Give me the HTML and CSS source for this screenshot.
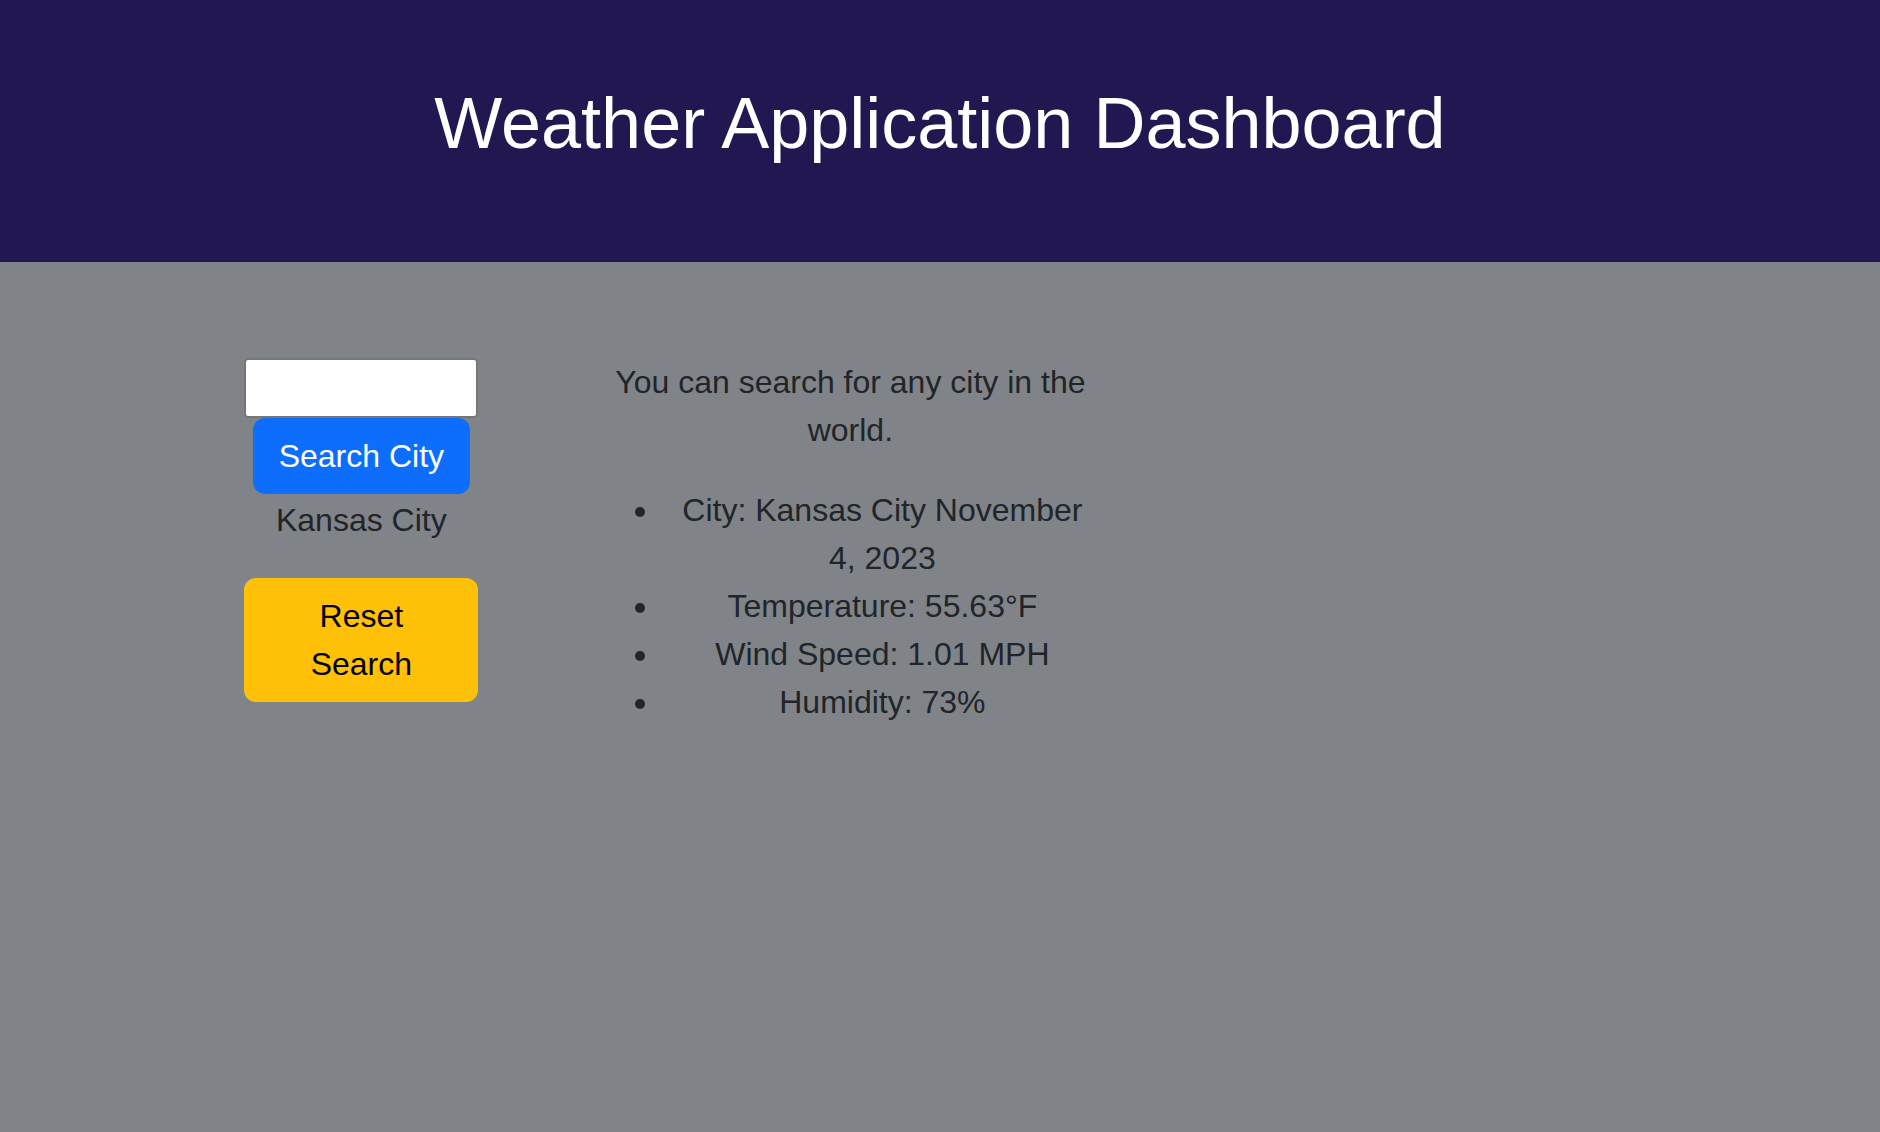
FILE: index.html
```html
<!DOCTYPE html>
<html lang="en">
<head>
<meta charset="utf-8">
<title>Weather Application Dashboard</title>
<link rel="stylesheet" href="styles.css">
</head>
<body>
<header class="page-header">
  <h1 class="page-title">Weather Application Dashboard</h1>
</header>
<main class="dashboard">
  <section class="search">
    <form class="search-form">
      <input class="search-input" type="text" aria-label="City">
      <button class="btn btn-primary" type="button">Search City</button>
    </form>
    <p class="history">Kansas City</p>
    <button class="btn btn-warning" type="button">Reset Search</button>
  </section>
  <section class="weather">
    <p class="intro">You can search for any city in the world.</p>
    <ul class="conditions">
      <li class="condition">City: Kansas City November 4, 2023</li>
      <li class="condition">Temperature: 55.63°F</li>
      <li class="condition">Wind Speed: 1.01 MPH</li>
      <li class="condition">Humidity: 73%</li>
    </ul>
  </section>
</main>
</body>
</html>
```
FILE: styles.css
```css
* {
  box-sizing: border-box;
}

body {
  margin: 0;
  background: #808387;
  color: #212529;
  font-family: "Liberation Sans", Arial, sans-serif;
  font-size: 32px;
  line-height: 48px;
  text-align: center;
}

.page-header {
  padding: 80px 32px 96px;
  background: #221750;
  color: #fff;
}

.page-title {
  margin: 0;
  font-size: 72px;
  font-weight: 400;
  line-height: 86px;
}

.dashboard {
  display: grid;
  grid-template-columns: 14.3% 30.3%;
  column-gap: 7.6%;
  margin: 96px 0 0 13%;
}

.search-form {
  display: flex;
  flex-direction: column;
  align-items: center;
}

.search-input {
  width: 100%;
  height: 60px;
  padding: 2px 4px;
  border: 2px solid #767676;
  border-radius: 4px;
  background: #fff;
  font: inherit;
}

.btn {
  padding: 12px 24px;
  border: 2px solid transparent;
  border-radius: 12px;
  font: inherit;
  cursor: pointer;
}

.btn-primary {
  background: #0d6efd;
  color: #fff;
}

.btn-warning {
  width: 100%;
  background: #ffc107;
  color: #000;
}

.history {
  margin: 0 0 32px;
  padding: 2px 0;
}

.intro {
  margin: 0 0 32px;
}

.conditions {
  margin: 0;
  padding-left: 58px;
}

.condition {
  padding-left: 6px;
}
```
